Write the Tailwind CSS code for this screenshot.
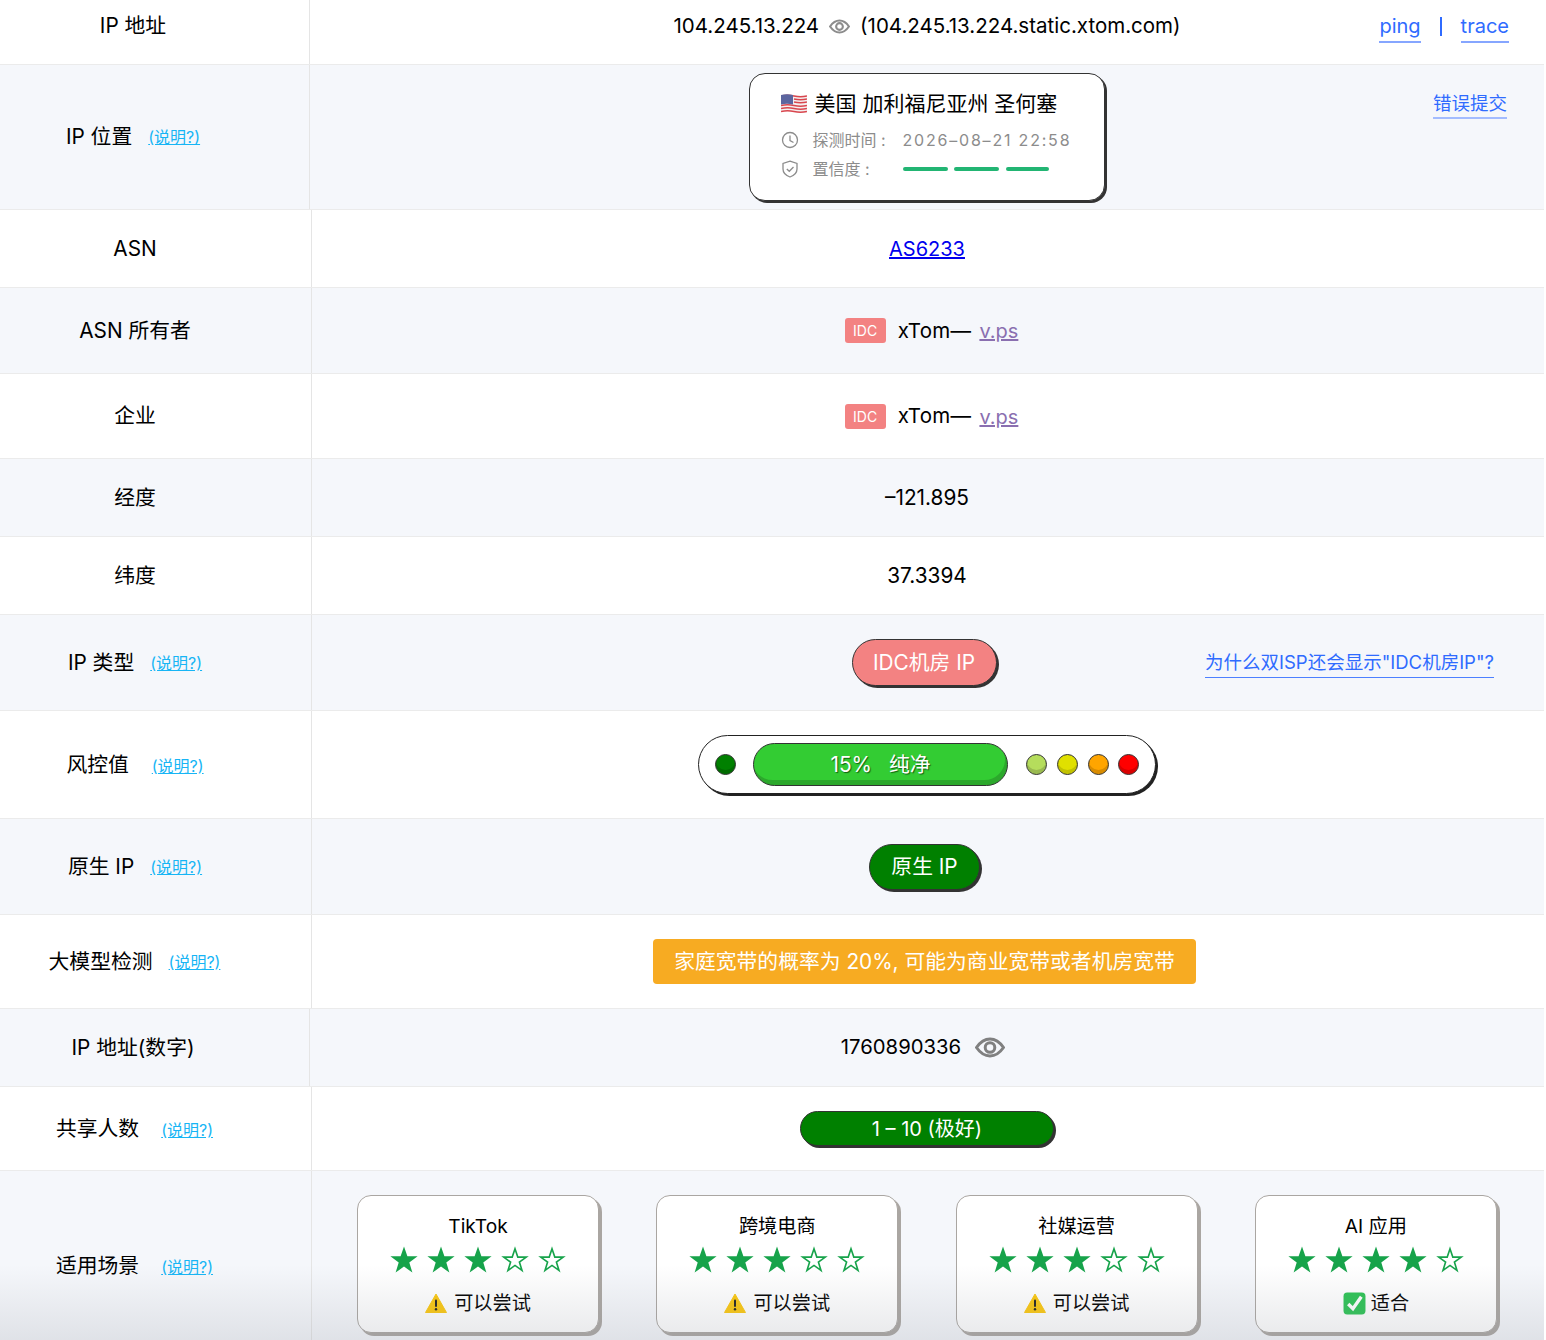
<!DOCTYPE html>
<html lang="zh-CN">
<head>
    <meta charset="UTF-8">
    <meta name="viewport" content="width=device-width, initial-scale=1.0">
    <title>IP 查询</title>
    <script src="https://cdn.jsdelivr.net/npm/@tailwindcss/browser@4"></script>
</head>
<body class="bg-white text-black font-['Inter','Noto_Sans_CJK_SC',sans-serif] text-[20.8px] overflow-hidden">

    <!-- shared icons -->
    <svg class="hidden">
        <symbol id="star-on" viewBox="0 0 28 28"><polygon fill="#16a34a" points="14,0.5 17.4,10.3 27.6,10.3 19.3,16.5 22.4,26.6 14,20.5 5.6,26.6 8.7,16.5 0.4,10.3 10.6,10.3"/></symbol>
        <symbol id="star-off" viewBox="0 0 28 28"><polygon fill="none" stroke="#16a34a" stroke-width="1.6" points="14,2.8 16.8,11.1 25.3,11.1 18.4,16.1 21,24.4 14,19.4 7,24.4 9.6,16.1 2.7,11.1 11.2,11.1"/></symbol>
        <symbol id="warn" viewBox="0 0 22 20"><path fill="#fbc70e" d="M11 1 L21.5 19.5 H0.5 Z" stroke="#fbc70e" stroke-linejoin="round"/><rect x="10" y="6.5" width="2" height="7.5" rx="1" fill="#222"/><circle cx="11" cy="16.2" r="1.2" fill="#222"/></symbol>
        <symbol id="eye" viewBox="0 0 30 20"><path fill="none" stroke="currentColor" stroke-width="3" d="M1.5 10 C6 3.5 10 1.5 15 1.5 S24 3.5 28.5 10 C24 16.5 20 18.5 15 18.5 S6 16.5 1.5 10 Z"/><circle cx="15" cy="10" r="4.8" fill="none" stroke="currentColor" stroke-width="3"/></symbol>
    </svg>

    <main class="relative w-[1544px] h-[1340px] overflow-hidden">

        <!-- IP 地址 -->
        <div class="flex h-[65px] border-b border-[#ebebeb]">
            <div class="w-[310px] shrink-0 border-r border-[#e5e5e5] pr-[43px] pb-[12px] flex items-center justify-center">IP 地址</div>
            <div class="flex-1 grid grid-cols-[1fr_auto_1fr] items-center pb-[11px]">
                <div></div>
                <div class="flex items-center text-[20.5px]">
                    <span>104.245.13.224</span>
                    <svg class="w-[21px] h-[15px] ml-[10px] mr-[10px] text-[#8c8c8c]"><use href="#eye"/></svg>
                    <span>(104.245.13.224.static.xtom.com)</span>
                </div>
                <div class="justify-self-end flex items-center text-[20px] text-[#2f6bff] mr-[35px]">
                    <a class="border-b-2 border-[#86a6ff] leading-[30px]">ping</a>
                    <span class="mx-[19px] w-[2px] h-[19px] bg-[#2f6bff]"></span>
                    <a class="border-b-2 border-[#86a6ff] leading-[30px]">trace</a>
                </div>
            </div>
        </div>

        <!-- IP 位置 -->
        <div class="flex h-[145px] border-b border-[#ebebeb] bg-[#f5f7fb]">
            <div class="w-[310px] shrink-0 border-r border-[#e5e5e5] pr-[43px] flex items-center justify-center">
                <span>IP 位置</span><a class="ml-[16px] text-[16px] text-[#17b5f5] underline">(说明?)</a>
            </div>
            <div class="flex-1 grid grid-cols-[1fr_auto_1fr] items-start pt-[8px]">
                <div></div>
                <div class="w-[356px] h-[128px] -ml-[1px] rounded-[16px] bg-white border border-[#333] shadow-[2px_2px_0_#333] pl-[31px] pt-[15px]">
                    <div class="flex items-center h-[30px] text-[21px]">
                        <svg class="w-[26px] h-[22px] mr-[8px]" viewBox="0 0 26 22">
                            <path d="M0 2 q6.5 -1.5 13 0 t13 0 v17 q-6.5 1.5 -13 0 t-13 0 Z" fill="#f4f0f0"/>
                            <g fill="none" stroke="#d9464e" stroke-width="1.6">
                                <path d="M0 3 q6.5 -1.5 13 0 t13 0"/><path d="M13 6 q6.5 1.5 13 0"/><path d="M13 9 q6.5 1.5 13 0"/><path d="M0 12.5 q6.5 -1.5 13 0 t13 0"/><path d="M0 15.5 q6.5 -1.5 13 0 t13 0"/><path d="M0 18.5 q6.5 -1.5 13 0 t13 0"/>
                            </g>
                            <path d="M0 2 q6 -1.5 12 0 v9.5 q-6 -1.5 -12 0 Z" fill="#5c659f"/>
                        </svg>
                        <span>美国 加利福尼亚州 圣何塞</span>
                    </div>
                    <div class="flex items-center h-[24px] mt-[9px] text-[16px] text-[#8c8c8c]">
                        <svg class="w-[18px] h-[18px] mr-[14px]" viewBox="0 0 18 18" fill="none" stroke="#8c8c8c" stroke-width="1.3"><circle cx="9" cy="9" r="7.5"/><path d="M9 4.5 V9.5 L12.5 11.5"/></svg>
                        <span class="w-[90px]">探测时间 :</span>
                        <span class="tracking-[1.8px]">2026–08–21 22:58</span>
                    </div>
                    <div class="flex items-center h-[24px] mt-[5px] text-[16px] text-[#8c8c8c]">
                        <svg class="w-[18px] h-[18px] mr-[14px]" viewBox="0 0 18 18" fill="none" stroke="#8c8c8c" stroke-width="1.3"><path d="M9 1.2 L16 3.5 V9 C16 13 12.5 15.8 9 17 C5.5 15.8 2 13 2 9 V3.5 Z"/><path d="M5.8 9 L8.3 11.3 L12.5 7"/></svg>
                        <span class="w-[90px]">置信度 :</span>
                        <span class="w-[45px] h-[4px] rounded-full bg-[#22b573]"></span>
                        <span class="w-[45px] h-[4px] rounded-full bg-[#22b573] ml-[6px]"></span>
                        <span class="w-[43px] h-[4px] rounded-full bg-[#22b573] ml-[7px]"></span>
                    </div>
                </div>
                <div class="justify-self-end mr-[37px] mt-[17px]">
                    <a class="block border-b-2 border-[#a3bcff] text-[18.5px] text-[#2f6bff] leading-[27px]">错误提交</a>
                </div>
            </div>
        </div>

        <!-- ASN -->
        <div class="flex h-[78px] border-b border-[#ebebeb]">
            <div class="w-[312px] shrink-0 border-r border-[#e5e5e5] pr-[41px] flex items-center justify-center">ASN</div>
            <div class="flex-1 flex items-center justify-center pr-[2px]"><a class="text-[20px] text-[#0000ee] underline">AS6233</a></div>
        </div>

        <!-- ASN 所有者 -->
        <div class="flex h-[86px] border-b border-[#ebebeb] bg-[#f5f7fb]">
            <div class="w-[312px] shrink-0 border-r border-[#e5e5e5] pr-[41px] flex items-center justify-center">ASN 所有者</div>
            <div class="flex-1 flex items-center justify-center pl-[7px] text-[20.5px]">
                <span class="w-[41px] h-[25px] rounded-[3px] bg-[#f38282] text-white text-[14px] flex items-center justify-center mr-[12px]">IDC</span>
                <span class="tracking-[0.3px] pt-[1px]">xTom—</span><a class="ml-[8px] pt-[1px] text-[20px] text-[#8a6fb0] underline">v.ps</a>
            </div>
        </div>

        <!-- 企业 -->
        <div class="flex h-[85px] border-b border-[#ebebeb]">
            <div class="w-[312px] shrink-0 border-r border-[#e5e5e5] pr-[41px] flex items-center justify-center">企业</div>
            <div class="flex-1 flex items-center justify-center pl-[7px] text-[20.5px]">
                <span class="w-[41px] h-[25px] rounded-[3px] bg-[#f38282] text-white text-[14px] flex items-center justify-center mr-[12px]">IDC</span>
                <span class="tracking-[0.3px] pt-[1px]">xTom—</span><a class="ml-[8px] pt-[1px] text-[20px] text-[#8a6fb0] underline">v.ps</a>
            </div>
        </div>

        <!-- 经度 -->
        <div class="flex h-[78px] border-b border-[#ebebeb] bg-[#f5f7fb]">
            <div class="w-[312px] shrink-0 border-r border-[#e5e5e5] pr-[41px] flex items-center justify-center">经度</div>
            <div class="flex-1 flex items-center justify-center pr-[2px]">–121.895</div>
        </div>

        <!-- 纬度 -->
        <div class="flex h-[78px] border-b border-[#ebebeb]">
            <div class="w-[312px] shrink-0 border-r border-[#e5e5e5] pr-[41px] flex items-center justify-center">纬度</div>
            <div class="flex-1 flex items-center justify-center pr-[2px]">37.3394</div>
        </div>

        <!-- IP 类型 -->
        <div class="flex h-[96px] border-b border-[#ebebeb] bg-[#f5f7fb]">
            <div class="w-[312px] shrink-0 border-r border-[#e5e5e5] pr-[41px] flex items-center justify-center">
                <span>IP 类型</span><a class="ml-[16px] text-[16px] text-[#17b5f5] underline">(说明?)</a>
            </div>
            <div class="flex-1 grid grid-cols-[1fr_auto_1fr] items-center">
                <div></div>
                <div class="w-[145px] h-[47px] -ml-[8px] rounded-full bg-[#f38282] border border-[#333] shadow-[2px_2px_0_#333] text-white flex items-center justify-center">IDC机房 IP</div>
                <div class="justify-self-end mr-[50px]">
                    <a class="block border-b border-[#4d80ff] text-[18.5px] text-[#2f6bff] leading-[30px] whitespace-nowrap">为什么双ISP还会显示"IDC机房IP"?</a>
                </div>
            </div>
        </div>

        <!-- 风控值 -->
        <div class="flex h-[108px] border-b border-[#ebebeb]">
            <div class="w-[312px] shrink-0 border-r border-[#e5e5e5] pr-[41px] flex items-center justify-center">
                <span>风控值</span><a class="ml-[23px] mt-[2px] text-[16px] text-[#17b5f5] underline">(说明?)</a>
            </div>
            <div class="flex-1 flex items-center justify-center">
                <div class="w-[458px] h-[59px] -ml-[2px] rounded-full bg-white border border-[#222] shadow-[2px_2px_0_#222] flex items-center pl-[16px]">
                    <span class="w-[21px] h-[21px] rounded-full bg-[#008000] border border-[#333] shadow-[inset_0_-4px_0_#006b00]"></span>
                    <div class="w-[255px] h-[43px] ml-[17px] rounded-full bg-[#33cc33] border border-[#333] shadow-[inset_-2px_-5px_0_#2ca82c] text-white [text-shadow:1px_1px_1px_#116011] flex items-center justify-center"><span>15%</span><span class="ml-[17px]">纯净</span></div>
                    <span class="w-[21px] h-[21px] ml-[18px] rounded-full bg-[#b5dd5c] border border-[#333] shadow-[inset_0_-4px_0_#9aba50]"></span>
                    <span class="w-[21px] h-[21px] ml-[10px] rounded-full bg-[#e0e000] border border-[#333] shadow-[inset_0_-4px_0_#c2c200]"></span>
                    <span class="w-[21px] h-[21px] ml-[10px] rounded-full bg-[#ffa500] border border-[#333] shadow-[inset_0_-4px_0_#d98c00]"></span>
                    <span class="w-[21px] h-[21px] ml-[9px] rounded-full bg-[#ff0000] border border-[#333] shadow-[inset_0_-4px_0_#d90000]"></span>
                </div>
            </div>
        </div>

        <!-- 原生 IP -->
        <div class="flex h-[96px] border-b border-[#ebebeb] bg-[#f5f7fb]">
            <div class="w-[312px] shrink-0 border-r border-[#e5e5e5] pr-[41px] flex items-center justify-center">
                <span>原生 IP</span><a class="ml-[16px] text-[16px] text-[#17b5f5] underline">(说明?)</a>
            </div>
            <div class="flex-1 flex items-center justify-center">
                <div class="w-[111px] h-[46px] -ml-[7px] rounded-full bg-[#008000] border border-[#333] shadow-[2px_2px_0_#333] text-white flex items-center justify-center">原生 IP</div>
            </div>
        </div>

        <!-- 大模型检测 -->
        <div class="flex h-[94px] border-b border-[#ebebeb]">
            <div class="w-[312px] shrink-0 border-r border-[#e5e5e5] pr-[42px] flex items-center justify-center">
                <span>大模型检测</span><a class="ml-[16px] text-[16px] text-[#17b5f5] underline">(说明?)</a>
            </div>
            <div class="flex-1 flex items-center justify-center">
                <div class="w-[543px] h-[45px] -ml-[7px] rounded-[4px] bg-[#f7ab22] text-white flex items-center justify-center">家庭宽带的概率为 20%, 可能为商业宽带或者机房宽带</div>
            </div>
        </div>

        <!-- IP 地址(数字) -->
        <div class="flex h-[78px] border-b border-[#ebebeb] bg-[#f5f7fb]">
            <div class="w-[310px] shrink-0 border-r border-[#e5e5e5] pr-[43px] flex items-center justify-center">IP 地址(数字)</div>
            <div class="flex-1 flex items-center justify-center pr-[8px] text-[20.3px]">
                <span>1760890336</span>
                <svg class="w-[30px] h-[21px] ml-[14px] text-[#808080]"><use href="#eye"/></svg>
            </div>
        </div>

        <!-- 共享人数 -->
        <div class="flex h-[84px] border-b border-[#ebebeb]">
            <div class="w-[312px] shrink-0 border-r border-[#e5e5e5] pr-[42px] flex items-center justify-center">
                <span>共享人数</span><a class="ml-[22px] mt-[2px] text-[16px] text-[#17b5f5] underline">(说明?)</a>
            </div>
            <div class="flex-1 flex items-center justify-center">
                <div class="w-[254px] h-[35px] -ml-[2px] rounded-full bg-[#008000] border border-[#333] shadow-[2px_2px_0_#333] text-white text-[20px] flex items-center justify-center">1 – 10 (极好)</div>
            </div>
        </div>

        <!-- 适用场景, cut off by the bottom of the window -->
        <div class="flex h-[190px] bg-[#f5f7fb]">
            <div class="w-[312px] shrink-0 border-r border-[#e5e5e5] pr-[42px] flex items-center justify-center">
                <span>适用场景</span><a class="ml-[22px] mt-[1px] text-[16px] text-[#17b5f5] underline">(说明?)</a>
            </div>
            <div class="flex-1 flex items-start gap-[57.3px] pl-[45px] pt-[24px] text-[19.2px]">

                <div class="w-[242px] h-[138px] rounded-[14px] bg-white border border-[#aaa6a2] shadow-[3px_3px_0_#aaa6a2] flex flex-col items-center pt-[15px]">
                    <div class="leading-[30px]">TikTok</div>
                    <div class="flex gap-[9px] mt-[5px]">
                        <svg class="w-[28px] h-[28px]"><use href="#star-on"/></svg><svg class="w-[28px] h-[28px]"><use href="#star-on"/></svg><svg class="w-[28px] h-[28px]"><use href="#star-on"/></svg><svg class="w-[28px] h-[28px]"><use href="#star-off"/></svg><svg class="w-[28px] h-[28px]"><use href="#star-off"/></svg>
                    </div>
                    <div class="flex items-center mt-[14px] leading-[30px]"><svg class="w-[22px] h-[20px] mr-[7px]"><use href="#warn"/></svg>可以尝试</div>
                </div>

                <div class="w-[242px] h-[138px] rounded-[14px] bg-white border border-[#aaa6a2] shadow-[3px_3px_0_#aaa6a2] flex flex-col items-center pt-[15px]">
                    <div class="leading-[30px]">跨境电商</div>
                    <div class="flex gap-[9px] mt-[5px]">
                        <svg class="w-[28px] h-[28px]"><use href="#star-on"/></svg><svg class="w-[28px] h-[28px]"><use href="#star-on"/></svg><svg class="w-[28px] h-[28px]"><use href="#star-on"/></svg><svg class="w-[28px] h-[28px]"><use href="#star-off"/></svg><svg class="w-[28px] h-[28px]"><use href="#star-off"/></svg>
                    </div>
                    <div class="flex items-center mt-[14px] leading-[30px]"><svg class="w-[22px] h-[20px] mr-[7px]"><use href="#warn"/></svg>可以尝试</div>
                </div>

                <div class="w-[242px] h-[138px] rounded-[14px] bg-white border border-[#aaa6a2] shadow-[3px_3px_0_#aaa6a2] flex flex-col items-center pt-[15px]">
                    <div class="leading-[30px]">社媒运营</div>
                    <div class="flex gap-[9px] mt-[5px]">
                        <svg class="w-[28px] h-[28px]"><use href="#star-on"/></svg><svg class="w-[28px] h-[28px]"><use href="#star-on"/></svg><svg class="w-[28px] h-[28px]"><use href="#star-on"/></svg><svg class="w-[28px] h-[28px]"><use href="#star-off"/></svg><svg class="w-[28px] h-[28px]"><use href="#star-off"/></svg>
                    </div>
                    <div class="flex items-center mt-[14px] leading-[30px]"><svg class="w-[22px] h-[20px] mr-[7px]"><use href="#warn"/></svg>可以尝试</div>
                </div>

                <div class="w-[242px] h-[138px] rounded-[14px] bg-white border border-[#aaa6a2] shadow-[3px_3px_0_#aaa6a2] flex flex-col items-center pt-[15px]">
                    <div class="leading-[30px]">AI 应用</div>
                    <div class="flex gap-[9px] mt-[5px]">
                        <svg class="w-[28px] h-[28px]"><use href="#star-on"/></svg><svg class="w-[28px] h-[28px]"><use href="#star-on"/></svg><svg class="w-[28px] h-[28px]"><use href="#star-on"/></svg><svg class="w-[28px] h-[28px]"><use href="#star-on"/></svg><svg class="w-[28px] h-[28px]"><use href="#star-off"/></svg>
                    </div>
                    <div class="flex items-center mt-[14px] leading-[30px]">
                        <svg class="w-[23px] h-[23px] mr-[5px]" viewBox="0 0 22 22"><rect x="0.5" y="0.5" width="21" height="21" rx="3.5" fill="#2bc253"/><path d="M5 11.5 L9.5 16 L17.5 4.5" fill="none" stroke="#fff" stroke-width="3.2"/></svg>适合
                    </div>
                </div>
            </div>
        </div>

        <!-- fade at the bottom edge -->
        <div class="absolute left-0 right-0 bottom-0 h-[75px] pointer-events-none bg-gradient-to-b from-transparent to-[#8a8f99]/20"></div>
    </main>
</body>
</html>
